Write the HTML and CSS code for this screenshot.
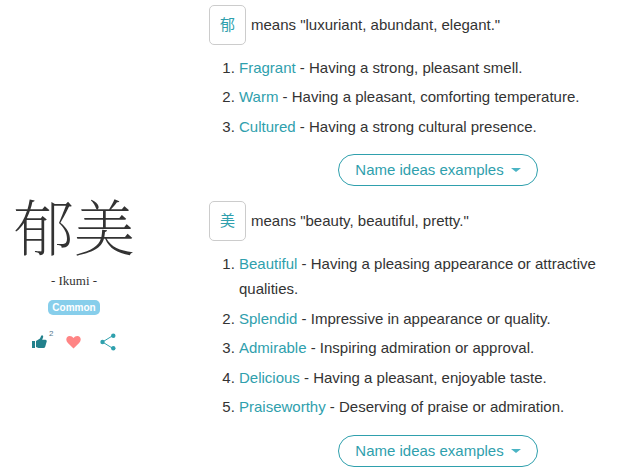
FILE: index.html
```html
<!DOCTYPE html>
<html lang="en">
<head>
<meta charset="utf-8">
<title>Ikumi</title>
<link rel="stylesheet" href="styles.css">
</head>
<body>
<main class="entry">
  <section class="name">
    <h1 class="kanji" lang="ja">郁美</h1>
    <p class="reading">- Ikumi -</p>
    <span class="badge">Common</span>
    <div class="actions">
      <button class="action" type="button" aria-label="Like">
        <svg width="15" height="14" viewBox="0 0 15 14" fill="#22818c"><path d="M0 6h3v7H0zM4 6 8 3.500 9.200.800Q9.800-.200 10.700.500 11.500 1.300 11 2.600L10.200 4.800H13.500Q15 5 14.700 6.400L13.200 11.800Q12.800 13 11.500 13H6.500L4 12z"/></svg>
        <span class="count">2</span>
      </button>
      <button class="action" type="button" aria-label="Favourite">
        <svg width="15" height="14" viewBox="0 0 16 14" fill="#ff8585"><path d="M8 13.800 2 8Q.300 6.200.300 4.200.500.700 3.900.500 6.500.400 8 2.700 9.500.400 12.100.500 15.500.700 15.700 4.200 15.700 6.200 14 8z"/></svg>
      </button>
      <button class="action" type="button" aria-label="Share">
        <svg width="16" height="18" viewBox="0 0 16 18" fill="#2fa0ad"><path d="M13 2.500 2.500 9 13 15.500" fill="none" stroke="#2fa0ad"/><circle cx="2.500" cy="9" r="2.200"/><circle cx="13.300" cy="2.700" r="2.200"/><circle cx="13.300" cy="15.300" r="2.200"/></svg>
      </button>
    </div>
  </section>
  <div class="meanings">
    <section class="meaning">
      <p class="summary"><a class="char" href="#" lang="ja">郁</a><span>means "luxuriant, abundant, elegant."</span></p>
      <ol class="senses">
        <li><a href="#">Fragrant</a> - Having a strong, pleasant smell.</li>
        <li><a href="#">Warm</a> - Having a pleasant, comforting temperature.</li>
        <li><a href="#">Cultured</a> - Having a strong cultural presence.</li>
      </ol>
      <div class="more"><button class="examples" type="button">Name ideas examples</button></div>
    </section>
    <section class="meaning">
      <p class="summary"><a class="char" href="#" lang="ja">美</a><span>means "beauty, beautiful, pretty."</span></p>
      <ol class="senses">
        <li><a href="#">Beautiful</a> - Having a pleasing appearance or attractive qualities.</li>
        <li><a href="#">Splendid</a> - Impressive in appearance or quality.</li>
        <li><a href="#">Admirable</a> - Inspiring admiration or approval.</li>
        <li><a href="#">Delicious</a> - Having a pleasant, enjoyable taste.</li>
        <li><a href="#">Praiseworthy</a> - Deserving of praise or admiration.</li>
      </ol>
      <div class="more"><button class="examples" type="button">Name ideas examples</button></div>
    </section>
  </div>
</main>
</body>
</html>
```

FILE: styles.css
```css
* {
  box-sizing: border-box;
}

body {
  margin: 0;
  background: #fff;
  color: #333;
  font: 15px/1.7 "Liberation Sans", "Noto Sans CJK JP", sans-serif;
}

p,
h1,
ol {
  margin: 0;
}

a {
  color: #2fa0ad;
  text-decoration: none;
}

.entry {
  display: grid;
  grid-template-columns: 148px 1fr;
  column-gap: 61px;
  align-items: center;
  padding-top: 5px;
}

.name {
  display: flex;
  flex-direction: column;
  align-items: center;
  padding-top: 66px;
}

.kanji {
  font: 100 61px/76px "Noto Serif CJK JP", "Noto Sans CJK JP", serif;
}

.reading {
  margin-top: 8px;
  font: 13px/20px "Liberation Serif", serif;
}

.badge {
  margin-top: 9px;
  padding: 0 4px;
  border-radius: 5px;
  background: #87ceeb;
  color: #fff;
  font-size: 10px;
  font-weight: bold;
  line-height: 15px;
}

.actions {
  display: flex;
  align-items: center;
  gap: 19px;
  margin-top: 18px;
}

.action {
  position: relative;
  display: flex;
  padding: 0;
  border: 0;
  background: none;
}

.count {
  position: absolute;
  left: 17px;
  top: -6px;
  color: #55798c;
  font: 8px/10px "Liberation Sans", sans-serif;
}

.meanings {
  display: flex;
  flex-direction: column;
  gap: 15px;
}

.summary {
  display: flex;
  align-items: center;
  gap: 5px;
}

.char {
  padding: 6px 10px;
  border: 1px solid #ccc;
  border-radius: 5px;
  font-size: 15px;
}

.senses {
  display: flex;
  flex-direction: column;
  gap: 4px;
  margin-top: 10px;
  padding-left: 30px;
}

.more {
  display: flex;
  justify-content: center;
  margin-top: 15px;
  padding-left: 44px;
}

.examples {
  display: flex;
  align-items: center;
  gap: 7px;
  height: 32px;
  padding: 0 16px;
  border: 1px solid #2fa0ad;
  border-radius: 16px;
  background: #fff;
  color: #2fa0ad;
  font: 15px/20px "Liberation Sans", sans-serif;
}

.examples::after {
  content: "";
  border: 5px solid transparent;
  border-top: 4px solid #4bb4c4;
  border-bottom: 0;
}
```
